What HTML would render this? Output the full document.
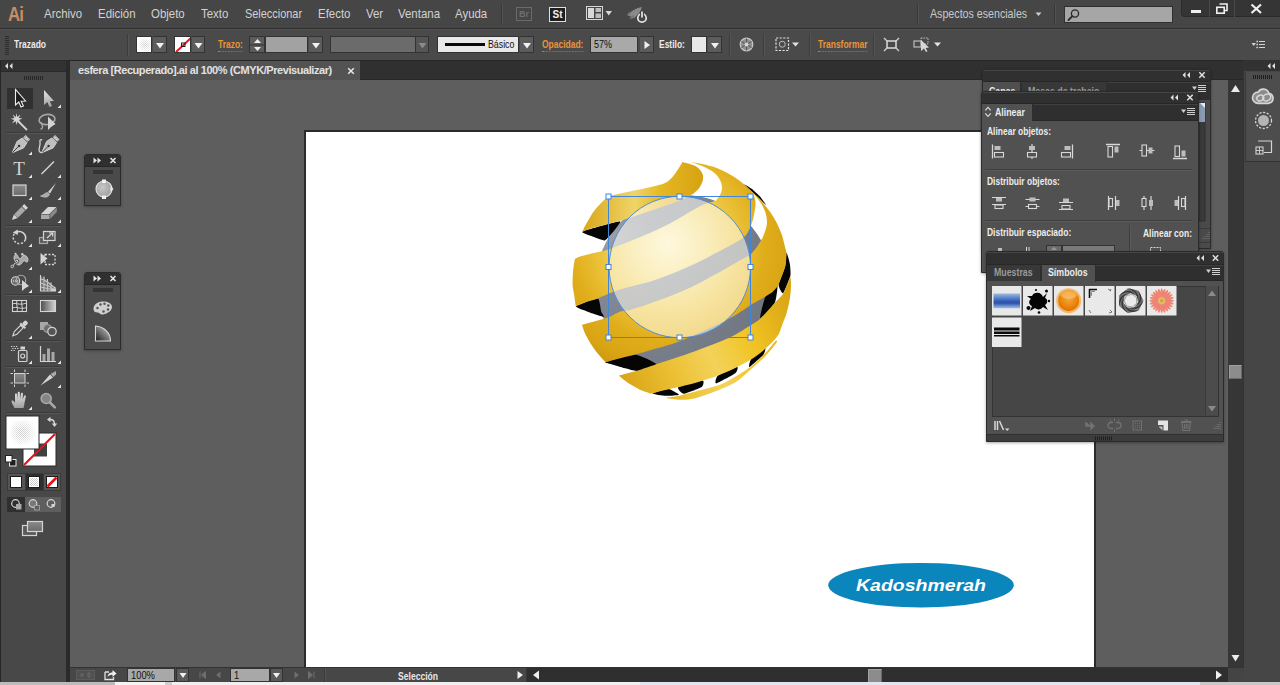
<!DOCTYPE html>
<html lang="es">
<head>
<meta charset="utf-8">
<title>esfera [Recuperado].ai</title>
<style>
*{box-sizing:border-box;margin:0;padding:0}
html,body{width:1280px;height:685px;overflow:hidden;background:#5e5e5e;font-family:"Liberation Sans",sans-serif;color:#d6d6d6;font-size:11px}
.abs{position:absolute}
#app{position:relative;width:1280px;height:685px;overflow:hidden;background:#5e5e5e}
#menubar{left:0;top:0;width:1280px;height:29px;background:#464646;border-bottom:1px solid #2e2e2e}
#menubar .mi{position:absolute;top:6px;font-size:13px;color:#d2d2d2;white-space:nowrap;transform:scaleX(.88);transform-origin:0 0}
#ctrl{left:0;top:29px;width:1280px;height:31px;background:#4a4a4a;border-top:1px solid #545454}
#tabrow{left:70px;top:60px;width:1173px;height:20px;background:#303030;border-top:1px solid #262626;border-bottom:1px solid #282828}
#tab{left:70px;top:61px;width:290px;height:19px;background:#535353;color:#e2e2e2;font-size:11px;font-weight:bold;line-height:19px;padding-left:8px;white-space:nowrap;letter-spacing:-0.43px}
#toolbox{left:0;top:60px;width:70px;height:622px;background:#484848;border-right:4px solid #2a2a2a;border-top:1px solid #2c2c2c}
#tbhead{left:0;top:61px;width:66px;height:11px;background:#323232;border-bottom:1px solid #2a2a2a}
#artboard{left:304px;top:130px;width:792px;height:540px;background:#fff;border:2px solid #2b2b2b;border-bottom:none}
#vscroll{left:1228px;top:80px;width:15px;height:587px;background:#363636}
#rdock{left:1243px;top:60px;width:37px;height:622px;background:#464646;border-left:1px solid #333;border-top:1px solid #303030}
#status{left:70px;top:667px;width:1174px;height:15px;background:#474747;border-top:1px solid #333}
#bottomstrip{left:0;top:682px;width:1280px;height:3px;background:linear-gradient(to right,#bcbcbc 0,#bcbcbc 115px,#f4f4f4 115px,#f4f4f4 165px,#cfcfcf 165px,#cfcfcf 172px,#f0f0f0 172px,#f0f0f0 640px,#dfe8f0 640px,#dfe8f0 1200px,#c8c8c8 1200px)}

.ailogo{left:8px;top:0.5px;font-size:20.500px;font-weight:bold;color:#c58e68;letter-spacing:-1px;line-height:26px;transform:scaleX(.82);transform-origin:0 0}
.vsep{width:1px;background:#383838;border-right:1px solid #525252;width:2px}
.brbox{width:16px;height:14px;border:1px solid #6a6a6a;color:#6f6f6f;font-size:9px;font-weight:bold;line-height:12px;text-align:center}
.stbox{width:17px;height:15px;border:1px solid #e0e0e0;background:#1e1e1e;color:#f0f0f0;font-size:10px;font-weight:bold;line-height:13px;text-align:center}
#search{left:1064px;top:6px;width:109px;height:17px;background:#a6a6a6;border:1px solid #303030}
#winbtns{left:1181px;top:0;width:99px;height:17px;background:#353535;border-bottom-left-radius:4px;border-left:1px solid #2a2a2a;border-bottom:1px solid #2a2a2a}

.grip{width:4px;height:19px;background:repeating-linear-gradient(to bottom,#2c2c2c 0,#2c2c2c 1px,transparent 1px,transparent 2px)}
.cl{color:#eaeaea;font-size:11px;font-weight:bold;white-space:nowrap;transform:scaleX(.77);transform-origin:0 0}
.ol{color:#e8943a;font-size:11px;font-weight:bold;white-space:nowrap;border-bottom:1px dotted #c07a30;line-height:13px;transform:scaleX(.77);transform-origin:0 0}
.vsep2{top:4px;height:22px;width:2px;background:#3c3c3c;border-right:1px solid #555}
.sw{top:6px;width:16px;height:17px;border:1px solid #333;overflow:hidden}
.sw svg{display:block}
.ddb{top:6px;height:17px;border:1px solid #333;border-left:none;overflow:hidden}
.ddb svg{display:block}
.spin{top:6px;width:16px;height:17px;border:1px solid #333;overflow:hidden;background:#333}
.spin svg{display:block}
.inp{top:6px;height:17px;background:#a2a2a2;border:1px solid #333}

.panel{background:#4f4f4f;border:1px solid #2b2b2b;border-radius:3px 3px 0 0;overflow:hidden;box-shadow:0 1px 3px rgba(0,0,0,.35)}
.phead{background:#303030;border-top:1px solid #454545;border-bottom:1px solid #272727}
.ptabs{background:#2f2f2f;border-top:1px solid #404040;border-bottom:1px solid #272727}
.ptab{background:#4f4f4f;border-right:1px solid #2e2e2e}
.ptab.off{background:#383838}
.pt{position:absolute;color:#ececec;font-size:11px;font-weight:bold;white-space:nowrap;transform:scaleX(.8);transform-origin:0 0;line-height:13px}

.fpanel{background:#4a4a4a;border:1px solid #2b2b2b;border-radius:3px 3px 0 0;overflow:hidden;box-shadow:0 1px 3px rgba(0,0,0,.3)}
.sinp{top:0px;height:14px;background:#a8a8a8;border:1px solid #333}
.sinp span{position:absolute;left:3px;top:0px;color:#111;font-size:11px;transform:scaleX(.85);transform-origin:0 0;line-height:12px}
.sdd{top:0px;width:13px;height:14px;background:#5a5a5a;border:1px solid #333}
</style>
</head>
<body>
<div id="app">
<!--MENUBAR-->
<div id="menubar" class="abs">
<div class="abs ailogo">Ai</div>
<span class="mi" style="left:44px">Archivo</span>
<span class="mi" style="left:98px">Edición</span>
<span class="mi" style="left:151px">Objeto</span>
<span class="mi" style="left:201px">Texto</span>
<span class="mi" style="left:245px;transform:scaleX(.84)">Seleccionar</span>
<span class="mi" style="left:318px">Efecto</span>
<span class="mi" style="left:366px">Ver</span>
<span class="mi" style="left:398px">Ventana</span>
<span class="mi" style="left:455px">Ayuda</span>
<div class="abs vsep" style="left:501px;top:4px;height:20px"></div>
<div class="abs brbox" style="left:516px;top:7px">Br</div>
<div class="abs stbox" style="left:549px;top:7px">St</div>
<svg class="abs" style="left:586px;top:6px" width="30" height="15" viewBox="0 0 30 15">
<rect x="0.5" y="0.5" width="16" height="13" fill="none" stroke="#d8d8d8" stroke-width="1"/>
<rect x="2" y="2" width="6" height="10" fill="#d8d8d8"/>
<rect x="9.5" y="2" width="5.5" height="4" fill="#bdbdbd"/>
<rect x="9.5" y="7.5" width="5.5" height="4.5" fill="#bdbdbd"/>
<path d="M19.5 5 L26 5 L22.75 9.5 Z" fill="#d8d8d8"/>
</svg>
<svg class="abs" style="left:626px;top:5px" width="24" height="20" viewBox="0 0 24 20">
<path d="M1 10 C5 6 10 3 16 2 C15 6 12 10 8 13 Z" fill="#8a8a8a"/>
<path d="M3 14 L7 10 L9 13 Z M2 8 L6 7 L3 11Z" fill="#7a7a7a"/>
<circle cx="16" cy="13" r="4.2" fill="none" stroke="#e0e0e0" stroke-width="1.8"/>
<rect x="14" y="6" width="4" height="5" fill="#454545"/>
<rect x="15.1" y="6.5" width="1.8" height="6" fill="#e0e0e0"/>
</svg>
<div class="abs vsep" style="left:917px;top:4px;height:20px"></div>
<span class="mi" style="left:930px;color:#c9c9c9;transform:scaleX(.82)">Aspectos esenciales</span>
<svg class="abs" style="left:1034px;top:11px" width="9" height="6" viewBox="0 0 9 6"><path d="M1.5 1.5 L7.5 1.5 L4.5 5 Z" fill="#cfcfcf"/></svg>
<div class="abs vsep" style="left:1054px;top:4px;height:20px"></div>
<div class="abs" id="search"><svg width="14" height="14" viewBox="0 0 14 14" style="position:absolute;left:2px;top:1px"><circle cx="8" cy="5.5" r="3.6" fill="none" stroke="#2a2a2a" stroke-width="1.3"/><path d="M5.4 8.2 L1.5 12" stroke="#2a2a2a" stroke-width="1.8" stroke-linecap="round"/></svg></div>
<div class="abs" id="winbtns">
<div class="abs" style="left:27px;top:0;width:1px;height:17px;background:#4a4a4a"></div>
<div class="abs" style="left:52px;top:0;width:1px;height:17px;background:#4a4a4a"></div>
<div class="abs" style="left:9px;top:10px;width:10px;height:3px;background:#f0f0f0"></div>
<svg class="abs" style="left:33px;top:3px" width="14" height="12" viewBox="0 0 14 12"><path d="M4.5 1 H12 V7.5 H9.5" fill="none" stroke="#f0f0f0" stroke-width="1.6"/><rect x="1.8" y="4.3" width="7.4" height="5.9" fill="none" stroke="#f0f0f0" stroke-width="1.6"/></svg>
<svg class="abs" style="left:68px;top:3px" width="13" height="12" viewBox="0 0 13 12"><path d="M1.5 1.5 L11 10 M11 1.5 L1.5 10" stroke="#f0f0f0" stroke-width="2.2"/></svg>
</div>
</div>
<!--CTRL-->
<div id="ctrl" class="abs">
<div class="abs grip" style="left:5px;top:6px"></div>
<span class="abs cl" style="left:14px;top:8px">Trazado</span>
<div class="abs vsep2" style="left:127px"></div>
<div class="abs sw" style="left:136px;background:#fff"><svg width="16" height="16" viewBox="0 0 16 16"><defs><pattern id="dots" width="2" height="2" patternUnits="userSpaceOnUse"><rect width="1" height="1" fill="#c9c9c9"/><rect x="1" y="1" width="1" height="1" fill="#c9c9c9"/></pattern><radialGradient id="fade"><stop offset="0" stop-color="#fff" stop-opacity="0"/><stop offset="1" stop-color="#fff" stop-opacity="1"/></radialGradient></defs><rect width="16" height="16" fill="url(#dots)"/><rect width="16" height="16" fill="url(#fade)"/></svg></div>
<div class="abs ddb" style="left:153px;width:14px;background:#5c5c5c"><svg width="14" height="16" viewBox="0 0 14 16"><path d="M3.0 6 L11.0 6 L7.0 11.5 Z" fill="#f2f2f2"/></svg></div>
<div class="abs sw" style="left:174px;background:#fff;width:17px"><svg width="17" height="16" viewBox="0 0 17 16"><path d="M1 15 L16 1" stroke="#e8141c" stroke-width="2"/><rect x="6.5" y="6" width="3.5" height="3.5" fill="none" stroke="#222" stroke-width="1"/></svg></div>
<div class="abs ddb" style="left:192px;width:13px;background:#5c5c5c"><svg width="13" height="16" viewBox="0 0 13 16"><path d="M2.5 6 L10.5 6 L6.5 11.5 Z" fill="#f2f2f2"/></svg></div>
<span class="abs ol" style="left:218px;top:8px">Trazo:</span>
<div class="abs spin" style="left:249px"><svg width="15" height="16" viewBox="0 0 15 16"><rect width="15" height="7.5" fill="#5c5c5c"/><rect y="8.5" width="15" height="7.5" fill="#5c5c5c"/><path d="M4 6 L11 6 L7.5 2 Z" fill="#efefef"/><path d="M4 10 L11 10 L7.5 14 Z" fill="#efefef"/></svg></div>
<div class="abs inp" style="left:265px;width:43px"></div>
<div class="abs ddb" style="left:309px;width:14px;background:#5c5c5c"><svg width="14" height="16" viewBox="0 0 14 16"><path d="M3.0 6 L11.0 6 L7.0 11.5 Z" fill="#f2f2f2"/></svg></div>
<div class="abs inp" style="left:330px;width:86px;background:#6b6b6b"></div>
<div class="abs ddb" style="left:416px;width:13px;background:#555"><svg width="13" height="16" viewBox="0 0 13 16"><path d="M2.5 6 L10.5 6 L6.5 11.5 Z" fill="#8a8a8a"/></svg></div>
<div class="abs inp" style="left:437px;width:82px;background:#e9e9e9"><div class="abs" style="left:7px;top:6px;width:40px;height:3px;background:#0a0a0a"></div><span class="abs" style="left:50px;top:1px;color:#111;font-size:11px;transform:scaleX(.8);transform-origin:0 0">Básico</span></div>
<div class="abs ddb" style="left:520px;width:14px;background:#5c5c5c"><svg width="14" height="16" viewBox="0 0 14 16"><path d="M3.0 6 L11.0 6 L7.0 11.5 Z" fill="#f2f2f2"/></svg></div>
<span class="abs ol" style="left:542px;top:8px">Opacidad:</span>
<div class="abs inp" style="left:590px;width:48px;background:#a9a9a9"><span class="abs" style="left:3px;top:1px;color:#111;font-size:11px;transform:scaleX(.82);transform-origin:0 0">57%</span></div>
<div class="abs ddb" style="left:640px;width:14px;background:#5c5c5c"><svg width="14" height="16" viewBox="0 0 14 16"><path d="M4.5 4 L4.5 12 L10 8 Z" fill="#f2f2f2"/></svg></div>
<span class="abs cl" style="left:659px;top:8px">Estilo:</span>
<div class="abs sw" style="left:691px;background:#e8e8e8"></div>
<div class="abs ddb" style="left:708px;width:14px;background:#5c5c5c"><svg width="14" height="16" viewBox="0 0 14 16"><path d="M3.0 6 L11.0 6 L7.0 11.5 Z" fill="#f2f2f2"/></svg></div>
<div class="abs vsep2" style="left:729px"></div>
<svg class="abs" style="left:739px;top:7px" width="15" height="15" viewBox="0 0 15 15"><circle cx="7.5" cy="7.5" r="6.3" fill="#8e8e8e" stroke="#c8c8c8" stroke-width="1.2"/><path d="M7.5 7.5 L7.5 1.5 M7.5 7.5 L12.5 4.5 M7.5 7.5 L12.5 10.5 M7.5 7.5 L7.5 13.5 M7.5 7.5 L2.5 10.5 M7.5 7.5 L2.5 4.5" stroke="#555" stroke-width="1"/><circle cx="7.5" cy="7.5" r="2" fill="#d5d5d5"/></svg>
<div class="abs vsep2" style="left:763px"></div>
<svg class="abs" style="left:775px;top:7px" width="28" height="15" viewBox="0 0 28 15"><rect x="1" y="1" width="12.5" height="12.5" fill="none" stroke="#e0e0e0" stroke-width="1.2" stroke-dasharray="2.2 1.4"/><circle cx="7.25" cy="7.25" r="3" fill="none" stroke="#bdbdbd" stroke-width="1"/><path d="M17 5.5 L24 5.5 L20.5 9.5 Z" fill="#e0e0e0"/></svg>
<div class="abs vsep2" style="left:809px"></div>
<span class="abs ol" style="left:818px;top:8px">Transformar</span>
<div class="abs vsep2" style="left:873px"></div>
<svg class="abs" style="left:883px;top:6px" width="17" height="17" viewBox="0 0 17 17"><rect x="4" y="5" width="9" height="7" fill="none" stroke="#e4e4e4" stroke-width="1.4"/><path d="M1 2 L4 5 M16 2 L13 5 M1 15 L4 12 M16 15 L13 12" stroke="#cfcfcf" stroke-width="1.4"/></svg>
<svg class="abs" style="left:913px;top:6px" width="30" height="17" viewBox="0 0 30 17"><rect x="1" y="5" width="7" height="6" fill="none" stroke="#bdbdbd" stroke-width="1.2"/><rect x="8" y="2" width="7" height="6" fill="none" stroke="#bdbdbd" stroke-width="1" stroke-dasharray="1.5 1"/><path d="M8 4 L8 15 L11 12.5 L13 16 L14.5 15.2 L12.6 12 L16 11.5 Z" fill="#d8d8d8"/><path d="M21 6.5 L28 6.5 L24.5 10.5 Z" fill="#e4e4e4"/></svg>
<svg class="abs" style="left:1251px;top:9px" width="15" height="11" viewBox="0 0 15 11"><path d="M0.500 4 L5 4 L2.750 7 Z" fill="#d0d0d0"/><path d="M8 2.500 H14 M8 5.500 H14 M8 8.500 H14" stroke="#d4d4d4" stroke-width="1.100"/><path d="M5.500 2.500 h1.300 M5.500 5.500 h1.300 M5.500 8.500 h1.300" stroke="#f0f0f0" stroke-width="1.300"/></svg>
</div>
<!--TABROW-->
<div id="tabrow" class="abs"></div>
<div id="tab" class="abs">esfera [Recuperado].ai al 100% (CMYK/Previsualizar)<svg class="abs" style="left:277px;top:5.500px" width="8" height="8" viewBox="0 0 8 8"><path d="M1.200 1.200 L6.800 6.800 M6.800 1.200 L1.200 6.800" stroke="#e8e8e8" stroke-width="1.500"/></svg></div>
<!--ARTBOARD-->
<div id="artboard" class="abs"></div>
<!--SPHERE-->
<svg class="abs" style="left:540px;top:140px" width="280" height="280" viewBox="540 140 280 280">
<defs>
<radialGradient id="gold" gradientUnits="userSpaceOnUse" cx="668" cy="245" r="135"><stop offset="0" stop-color="#fbeeb2"/><stop offset="0.25" stop-color="#f5dc7c"/><stop offset="0.5" stop-color="#ecc43c"/><stop offset="0.72" stop-color="#e0ad1a"/><stop offset="0.88" stop-color="#daa515"/><stop offset="1" stop-color="#cc970e"/></radialGradient>
<linearGradient id="goldB" gradientUnits="userSpaceOnUse" x1="615" y1="380" x2="792" y2="300"><stop offset="0" stop-color="#d7a213"/><stop offset="0.3" stop-color="#ecc136"/><stop offset="0.5" stop-color="#f3d25a"/><stop offset="0.72" stop-color="#f1c424"/><stop offset="1" stop-color="#d9a514"/></linearGradient>
<linearGradient id="goldT" gradientUnits="userSpaceOnUse" x1="580" y1="0" x2="710" y2="0"><stop offset="0" stop-color="#d9a516"/><stop offset="0.42" stop-color="#efd468"/><stop offset="0.62" stop-color="#e6b822"/><stop offset="1" stop-color="#d49e10"/></linearGradient>
<linearGradient id="goldR" gradientUnits="userSpaceOnUse" x1="690" y1="0" x2="792" y2="0"><stop offset="0" stop-color="#e0ac18"/><stop offset="0.6" stop-color="#d9a414"/><stop offset="1" stop-color="#c8920e"/></linearGradient>
<radialGradient id="gray" gradientUnits="userSpaceOnUse" cx="610" cy="235" r="190"><stop offset="0" stop-color="#9ca0aa"/><stop offset="0.2" stop-color="#858b98"/><stop offset="0.6" stop-color="#79808c"/><stop offset="1" stop-color="#6c747e"/></radialGradient>
<radialGradient id="ov" gradientUnits="userSpaceOnUse" cx="668" cy="240" r="100"><stop offset="0" stop-color="#ffffff"/><stop offset="1" stop-color="#fffbe6"/></radialGradient>
</defs>
<circle cx="684" cy="283" r="88" fill="url(#gray)"/>
<path d="M582.4 231.7 C583.9 230.7 605.8 224.6 609.0 223.8 C612.2 223.0 620.1 221.0 620.4 221.7 C620.7 222.4 613.9 231.0 612.6 232.6 C611.3 234.2 606.5 240.1 604.7 240.4 C602.9 240.7 593.4 236.7 591.5 236.0 C589.6 235.3 580.9 232.7 582.4 231.7 Z" fill="#050505"/>
<path d="M575.8 306.3 C576.5 305.1 595.6 298.0 597.7 298.4 C599.8 298.8 600.7 310.0 601.2 311.5 C601.7 313.0 604.8 316.7 603.8 316.8 C602.8 316.9 592.1 313.3 589.8 312.4 C587.5 311.5 575.1 307.5 575.8 306.3 Z" fill="#050505"/>
<path d="M605.3 361.8 C607.1 360.9 630.7 354.2 635.0 354.4 C639.3 354.6 656.8 363.1 657.0 364.5 C657.2 365.9 640.1 370.7 637.5 371.0 C634.9 371.3 628.3 369.1 626.3 368.6 C624.3 368.1 614.8 365.3 613.0 364.7 C611.2 364.1 603.5 362.7 605.3 361.8 Z" fill="#050505"/>
<path d="M744.0 184.2 C744.4 184.3 750.7 188.0 752.0 189.0 C753.3 190.0 758.8 195.2 760.0 196.5 C761.2 197.8 766.2 204.9 766.0 205.0 C765.8 205.1 759.5 198.7 758.0 197.3 C756.5 195.9 748.8 188.8 747.6 187.7 C746.4 186.6 743.6 184.1 744.0 184.2 Z" fill="#050505"/>
<path d="M786.5 252.5 C786.9 252.3 789.5 261.7 789.8 263.6 C790.1 265.5 790.9 273.0 790.4 275.5 C789.9 278.0 784.2 292.4 783.2 293.2 C782.2 294.0 778.4 286.9 778.6 284.7 C778.8 282.5 784.5 269.0 785.2 266.3 C785.9 263.6 786.1 252.7 786.5 252.5 Z" fill="#050505"/>
<path d="M765.5 296.5 C766.9 293.8 776.5 284.8 777.3 285.3 C778.1 285.8 776.1 300.3 774.7 303.0 C773.3 305.7 761.0 318.6 760.2 318.1 C759.4 317.6 764.1 299.2 765.5 296.5 Z" fill="#050505"/>
<path d="M652.6 393.4 C652.8 392.8 666.2 388.9 668.4 389.0 C670.6 389.1 679.1 394.1 678.9 394.7 C678.7 395.3 667.9 395.9 665.7 395.8 C663.5 395.7 652.4 394.0 652.6 393.4 Z" fill="#050505"/>
<path d="M678.3 387.2 C679.9 386.1 700.5 380.6 702.5 380.6 C704.5 380.6 703.3 385.9 701.7 387.0 C700.1 388.1 685.8 393.7 683.8 393.7 C681.8 393.7 676.7 388.3 678.3 387.2 Z" fill="#050505"/>
<path d="M717.8 375.8 C719.5 374.4 735.6 367.3 737.1 367.1 C738.6 366.9 737.0 371.9 735.3 373.3 C733.5 374.7 717.6 383.2 716.1 383.4 C714.6 383.6 716.0 377.2 717.8 375.8 Z" fill="#050505"/>
<path d="M751.1 359.2 C752.4 357.6 764.1 348.2 765.1 347.8 C766.1 347.4 764.7 353.2 763.4 354.8 C762.1 356.4 750.3 366.7 749.3 367.1 C748.3 367.5 749.8 360.8 751.1 359.2 Z" fill="#050505"/>
<path d="M666.6 397.4 C668.3 397.2 673.6 396.8 677.0 396.2 C680.4 395.6 682.4 394.8 686.9 393.7 C691.4 392.6 699.9 390.3 703.8 389.3 C707.7 388.3 706.6 388.8 710.3 387.6 C714.0 386.4 719.2 385.5 726.0 382.0 C732.8 378.5 744.5 371.2 751.0 366.5 C757.5 361.8 760.9 357.8 765.0 353.5 C769.1 349.2 773.8 342.9 775.6 340.8 C775.8 341.1 778.3 340.0 776.5 342.6 C774.7 345.2 769.8 351.7 765.0 356.6 C760.2 361.6 752.1 368.3 747.6 372.3 C743.1 376.3 741.3 378.4 737.7 380.8 C734.1 383.2 730.6 384.9 726.0 387.0 C721.4 389.1 715.5 391.4 710.3 393.3 C705.1 395.2 699.7 397.3 694.7 398.4 C689.8 399.5 685.3 399.8 680.6 399.7 C675.9 399.6 668.9 398.2 666.6 397.9 L666.6 397.4 Z" fill="url(#goldB)"/>
<path d="M618.7 375.5 C622.1 374.6 631.9 372.3 638.8 370.2 C645.7 368.1 650.6 366.1 660.0 363.0 C669.4 359.9 683.3 355.6 695.0 351.3 C706.7 347.0 720.7 341.7 730.0 337.3 C739.3 332.9 746.0 328.1 751.0 325.0 C756.0 321.9 756.2 322.5 760.2 318.8 C764.2 315.1 770.9 307.3 774.7 303.0 C778.5 298.7 780.7 297.4 783.2 293.2 C785.7 289.0 788.6 280.9 789.8 278.0 C791.0 275.1 790.3 275.9 790.4 275.5 C790.5 277.2 791.1 282.1 791.0 286.0 C790.9 289.9 790.5 294.4 789.8 299.0 C789.0 303.6 787.7 309.3 786.5 313.5 C785.3 317.7 783.7 320.6 782.5 324.0 C781.3 327.4 779.7 332.2 779.1 333.8 C777.9 335.3 775.5 339.1 772.0 342.6 C768.5 346.1 762.7 351.3 758.0 354.8 C753.3 358.3 748.7 361.0 744.0 363.6 C739.3 366.2 735.2 368.3 730.0 370.6 C724.8 372.9 718.4 375.6 712.6 377.6 C706.8 379.7 700.9 381.3 695.0 382.9 C689.1 384.5 681.9 386.1 677.5 387.2 C673.1 388.2 671.3 388.5 668.4 389.2 C665.5 389.9 662.6 390.6 660.0 391.3 C657.4 392.0 653.8 393.0 652.6 393.4 C652.0 393.3 651.2 393.6 649.0 392.9 C646.8 392.2 642.4 390.8 639.4 389.4 C636.4 388.0 633.5 386.4 630.7 384.6 C627.9 382.9 624.8 380.4 622.8 378.9 C620.8 377.4 619.4 376.1 618.7 375.5 Z" fill="url(#goldB)"/>
<path d="M581.9 324.7 C584.1 324.1 590.5 322.5 595.0 321.2 C599.5 319.9 604.8 318.6 609.0 317.0 C613.2 315.4 616.8 312.7 620.4 311.5 C624.0 310.3 624.7 311.3 630.5 309.7 C636.3 308.1 645.1 305.4 655.0 301.8 C664.9 298.2 679.8 292.5 690.0 287.8 C700.2 283.1 707.6 278.6 716.4 273.8 C725.2 269.0 736.9 262.2 742.6 259.0 C748.3 255.8 747.9 256.8 750.5 254.5 C753.1 252.2 756.8 247.0 758.0 245.5 C758.9 243.9 761.9 239.5 763.4 235.8 C764.9 232.2 766.6 227.7 766.9 223.6 C767.2 219.5 766.5 215.4 765.0 211.3 C763.5 207.2 760.9 202.9 758.0 199.0 C755.1 195.1 749.3 189.6 747.6 187.7 C749.3 189.3 753.9 192.8 758.0 197.3 C762.1 201.8 768.2 209.0 772.0 214.8 C775.8 220.6 778.7 226.8 780.9 232.3 C783.1 237.8 784.4 244.6 785.3 248.0 C786.2 251.4 786.3 252.2 786.5 253.0 C786.3 255.2 786.5 261.0 785.2 266.3 C783.9 271.6 779.7 281.6 778.6 284.7 C777.7 285.8 775.5 289.2 773.3 291.2 C771.1 293.2 768.9 294.4 765.5 296.5 C762.1 298.6 756.8 301.2 753.0 303.6 C749.2 306.0 747.3 307.7 742.6 310.6 C737.9 313.5 733.8 316.6 725.0 321.0 C716.2 325.4 698.8 333.2 690.0 337.0 C681.2 340.8 678.5 341.8 672.0 344.0 C665.5 346.2 657.1 348.2 651.0 350.0 C644.9 351.8 640.2 353.2 635.3 354.5 C630.3 355.8 626.3 356.7 621.3 358.0 C616.3 359.3 608.1 361.6 605.5 362.3 C603.8 360.2 598.2 354.4 595.0 350.0 C591.8 345.6 588.5 340.2 586.3 336.0 C584.1 331.8 582.6 326.6 581.9 324.7 Z" fill="url(#gold)"/>
<path d="M574.9 258.8 C575.9 258.4 577.6 257.2 581.0 256.2 C584.4 255.2 590.3 253.9 595.0 252.7 C599.7 251.5 603.2 251.1 609.0 249.2 C614.8 247.3 623.0 244.1 630.0 241.3 C637.0 238.5 643.7 235.9 651.0 232.6 C658.3 229.2 665.7 225.6 673.9 221.2 C682.1 216.8 693.0 209.7 700.0 206.3 C707.0 202.9 713.3 201.7 716.0 200.8 C716.9 199.3 720.4 194.9 721.3 192.0 C722.2 189.1 722.2 186.2 721.3 183.3 C720.4 180.4 718.6 177.1 716.0 174.5 C713.4 171.9 709.9 169.7 705.5 167.5 C701.1 165.3 692.4 162.4 689.8 161.4 C693.6 162.3 705.9 164.4 712.6 166.6 C719.3 168.8 724.8 171.6 730.0 174.5 C735.2 177.4 740.2 181.0 744.0 184.2 C747.8 187.4 751.0 190.7 752.9 193.8 C754.8 196.9 755.2 199.7 755.5 202.6 C755.8 205.5 755.0 208.4 754.6 211.3 C754.2 214.2 753.8 217.1 752.9 220.0 C752.0 222.9 750.1 227.5 749.5 229.0 C748.9 230.0 747.8 233.1 746.0 235.0 C744.2 236.9 743.9 237.5 739.0 240.5 C734.1 243.5 724.6 248.6 716.4 252.8 C708.2 257.1 700.2 261.5 690.0 266.0 C679.8 270.5 666.7 276.1 655.0 280.0 C643.3 283.9 629.5 286.5 620.0 289.6 C610.5 292.7 603.3 296.3 597.7 298.4 C592.1 300.4 589.9 300.6 586.3 301.9 C582.6 303.2 577.5 305.6 575.8 306.3 C575.5 304.2 574.5 297.5 574.0 294.0 C573.5 290.5 572.8 288.9 572.6 285.1 C572.5 281.3 572.7 275.5 573.1 271.1 C573.5 266.7 574.6 260.9 574.9 258.8 Z" fill="url(#gold)"/>
<path d="M582.4 231.7 C583.0 230.4 584.2 227.5 586.3 223.8 C588.4 220.2 591.4 214.4 595.0 209.8 C598.6 205.2 606.0 198.4 608.2 196.1 C611.8 195.3 622.9 192.9 630.0 191.4 C637.1 189.9 645.2 188.4 651.0 187.0 C656.8 185.6 661.4 184.7 665.0 183.0 C668.6 181.3 670.1 179.4 672.4 177.0 C674.7 174.6 676.9 170.9 678.6 168.4 C680.3 165.9 681.8 163.0 682.4 161.9 C684.5 162.6 691.7 164.0 695.0 165.8 C698.3 167.6 700.7 170.5 702.0 172.8 C703.3 175.1 703.3 177.3 702.9 179.8 C702.5 182.3 701.0 185.4 699.4 187.7 C697.8 190.0 694.3 192.8 693.3 193.8 C692.1 194.4 689.2 196.0 686.0 197.5 C682.8 199.0 679.8 200.6 674.0 202.8 C668.2 205.0 658.3 208.2 651.0 210.7 C643.7 213.2 637.0 215.5 630.0 217.7 C623.0 219.9 615.4 222.1 609.0 223.8 C602.6 225.6 595.9 226.9 591.5 228.2 C587.1 229.5 583.9 231.1 582.4 231.7 Z" fill="url(#goldT)"/>
<circle cx="679.8" cy="267" r="70.7" fill="url(#ov)" fill-opacity="0.57"/>
<circle cx="679.8" cy="267" r="70.7" fill="none" stroke="#4f8fdc" stroke-width="1"/>
<rect x="608.5" y="196.500" width="142" height="141" fill="none" stroke="#3f86dc" stroke-width="1"/>
<rect x="606.0" y="194.0" width="5" height="5" fill="#fff" stroke="#3f86dc" stroke-width="1"/>
<rect x="606.0" y="264.5" width="5" height="5" fill="#fff" stroke="#3f86dc" stroke-width="1"/>
<rect x="606.0" y="335.0" width="5" height="5" fill="#fff" stroke="#3f86dc" stroke-width="1"/>
<rect x="677.0" y="194.0" width="5" height="5" fill="#fff" stroke="#3f86dc" stroke-width="1"/>
<rect x="677.0" y="335.0" width="5" height="5" fill="#fff" stroke="#3f86dc" stroke-width="1"/>
<rect x="748.0" y="194.0" width="5" height="5" fill="#fff" stroke="#3f86dc" stroke-width="1"/>
<rect x="748.0" y="264.5" width="5" height="5" fill="#fff" stroke="#3f86dc" stroke-width="1"/>
<rect x="748.0" y="335.0" width="5" height="5" fill="#fff" stroke="#3f86dc" stroke-width="1"/>
</svg>
<!--LOGO-->
<svg class="abs" style="left:820px;top:555px" width="200" height="60" viewBox="820 555 200 60">
<ellipse cx="921" cy="585.200" rx="92.800" ry="22.300" fill="#0a86bd"/>
<text x="921" y="591" text-anchor="middle" font-family="Liberation Sans,sans-serif" font-weight="bold" font-style="italic" font-size="17" fill="#fff" textLength="130" lengthAdjust="spacingAndGlyphs">Kadoshmerah</text>
</svg>
<!--FLOAT-->
<div class="abs fpanel" style="left:84px;top:154px;width:37px;height:52px"><div class="abs" style="left:0;top:0;width:100%;height:12px;background:#303030;border-bottom:1px solid #262626"></div></div>
<div class="abs fpanel" style="left:84px;top:272px;width:37px;height:78px"><div class="abs" style="left:0;top:0;width:100%;height:12px;background:#303030;border-bottom:1px solid #262626"></div></div>
<svg class="abs" style="left:80px;top:150px" width="50" height="210" viewBox="80 150 50 210">
<defs><linearGradient id="qg" x1="0" y1="1" x2="1" y2="0"><stop offset="0" stop-color="#1a1a1a"/><stop offset="0.6" stop-color="#8a8a8a"/><stop offset="1" stop-color="#e0e0e0"/></linearGradient><radialGradient id="cg" cx="0.4" cy="0.4" r="0.7"><stop offset="0" stop-color="#c8c8c8"/><stop offset="1" stop-color="#9a9a9a"/></radialGradient></defs>
<path d="M93.5 157.5 L97 160.5 L93.5 163.5 Z M97.5 157.5 L101 160.5 L97.500 163.5 Z" fill="#e4e4e4"/>
<path d="M110.500 158.0 L115.500 163.0 M115.500 158.0 L110.500 163.0" stroke="#e4e4e4" stroke-width="1.500"/>
<path d="M93.5 275.5 L97 278.5 L93.5 281.5 Z M97.5 275.5 L101 278.5 L97.500 281.5 Z" fill="#e4e4e4"/>
<path d="M110.500 276.0 L115.500 281.0 M115.500 276.0 L110.500 281.0" stroke="#e4e4e4" stroke-width="1.500"/>
<rect x="93.5" y="170" width="1" height="4" fill="#1e1e1e"/>
<rect x="95.5" y="170" width="1" height="4" fill="#1e1e1e"/>
<rect x="97.5" y="170" width="1" height="4" fill="#1e1e1e"/>
<rect x="99.5" y="170" width="1" height="4" fill="#1e1e1e"/>
<rect x="101.5" y="170" width="1" height="4" fill="#1e1e1e"/>
<rect x="103.5" y="170" width="1" height="4" fill="#1e1e1e"/>
<rect x="105.5" y="170" width="1" height="4" fill="#1e1e1e"/>
<rect x="107.5" y="170" width="1" height="4" fill="#1e1e1e"/>
<rect x="109.5" y="170" width="1" height="4" fill="#1e1e1e"/>
<rect x="111.5" y="170" width="1" height="4" fill="#1e1e1e"/>
<rect x="93.5" y="288" width="1" height="4" fill="#1e1e1e"/>
<rect x="95.5" y="288" width="1" height="4" fill="#1e1e1e"/>
<rect x="97.5" y="288" width="1" height="4" fill="#1e1e1e"/>
<rect x="99.5" y="288" width="1" height="4" fill="#1e1e1e"/>
<rect x="101.5" y="288" width="1" height="4" fill="#1e1e1e"/>
<rect x="103.5" y="288" width="1" height="4" fill="#1e1e1e"/>
<rect x="105.5" y="288" width="1" height="4" fill="#1e1e1e"/>
<rect x="107.5" y="288" width="1" height="4" fill="#1e1e1e"/>
<rect x="109.5" y="288" width="1" height="4" fill="#1e1e1e"/>
<rect x="111.5" y="288" width="1" height="4" fill="#1e1e1e"/>
<circle cx="104" cy="189" r="8" fill="url(#cg)" stroke="#e0e0e0" stroke-width="1.200"/>
<rect x="102" y="179.500" width="4" height="3.500" fill="#f0f0f0"/><rect x="102" y="195.500" width="4" height="3.500" fill="#f0f0f0"/><path d="M110.500 186.500 L113.500 189 L110.500 191.500 Z" fill="#f0f0f0"/>
<path d="M93.500 309 C93.500 304 98 301.500 103.500 301.500 C109 301.500 112 304 112 307 C112 310.500 108 313.500 103 314.500 C100 315 99.500 312.500 97.500 312.500 C95 312.500 93.500 311.500 93.500 309 Z" fill="#cfcfcf"/>
<circle cx="97.5" cy="308" r="1.250" fill="#555"/>
<circle cx="100.5" cy="304.5" r="1.250" fill="#555"/>
<circle cx="104.5" cy="303.8" r="1.250" fill="#555"/>
<circle cx="108.3" cy="305.5" r="1.250" fill="#555"/>
<circle cx="108" cy="309.5" r="1.250" fill="#555"/>
<circle cx="103.5" cy="311.5" r="1.250" fill="#555"/>
<path d="M95.500 326 L95.500 341 L110.500 341 C110.500 333 104 326.500 95.500 326 Z" fill="url(#qg)" stroke="#d8d8d8" stroke-width="1.100"/>
</svg>
<!--TOOLBOX-->
<div id="toolbox" class="abs"></div>
<div id="tbhead" class="abs"></div>
<svg class="abs" style="left:0;top:0" width="67" height="685" viewBox="0 0 67 685">
<defs><linearGradient id="gv" x1="0" y1="0" x2="0" y2="1"><stop offset="0" stop-color="#8a8a8a"/><stop offset="1" stop-color="#6a6a6a"/></linearGradient><linearGradient id="gh" x1="0" y1="0" x2="1" y2="0"><stop offset="0" stop-color="#4a4a4a"/><stop offset="1" stop-color="#d8d8d8"/></linearGradient><linearGradient id="gl" x1="0" y1="0" x2="0" y2="1"><stop offset="0" stop-color="#e4e4e4"/><stop offset="1" stop-color="#a0a0a0"/></linearGradient></defs>
<path d="M8 63 L5 66 L8 69 Z M12.5 63 L9.5 66 L12.5 69 Z" fill="#e0e0e0"/>
<rect x="24" y="76" width="1" height="4" fill="#262626"/>
<rect x="26" y="76" width="1" height="4" fill="#262626"/>
<rect x="28" y="76" width="1" height="4" fill="#262626"/>
<rect x="30" y="76" width="1" height="4" fill="#262626"/>
<rect x="32" y="76" width="1" height="4" fill="#262626"/>
<rect x="34" y="76" width="1" height="4" fill="#262626"/>
<rect x="36" y="76" width="1" height="4" fill="#262626"/>
<rect x="38" y="76" width="1" height="4" fill="#262626"/>
<rect x="40" y="76" width="1" height="4" fill="#262626"/>
<rect x="42" y="76" width="1" height="4" fill="#262626"/>
<rect x="6" y="132" width="55" height="1" fill="#3a3a3a"/><rect x="6" y="133" width="55" height="1" fill="#565656"/>
<rect x="6" y="225" width="55" height="1" fill="#3a3a3a"/><rect x="6" y="226" width="55" height="1" fill="#565656"/>
<rect x="6" y="294" width="55" height="1" fill="#3a3a3a"/><rect x="6" y="295" width="55" height="1" fill="#565656"/>
<rect x="6" y="340" width="55" height="1" fill="#3a3a3a"/><rect x="6" y="341" width="55" height="1" fill="#565656"/>
<rect x="6" y="366" width="55" height="1" fill="#3a3a3a"/><rect x="6" y="367" width="55" height="1" fill="#565656"/>
<rect x="6" y="412" width="55" height="1" fill="#3a3a3a"/><rect x="6" y="413" width="55" height="1" fill="#565656"/>
<rect x="7" y="88" width="26" height="21" fill="#303030"/>
<path d="M15.5 89.5 L15.5 105 L18.8 102 L21 107 L23.4 106 L21.2 101.2 L25.5 101 Z" fill="#1c1c1c" stroke="#ececec" stroke-width="1.1" stroke-linejoin="miter"/>
<path d="M44 90 L44 105 L47.3 102 L49.5 107 L52 106 L49.8 101.2 L54 101 Z" fill="url(#gl)"/>
<path d="M61 104.5 L61 108 L57.5 108 Z" fill="#e6e6e6"/>
<path d="M17 120 L27 130" stroke="#d4d4d4" stroke-width="1.8"/>
<path d="M16.5 113 L17.3 117 L20.5 114.5 L18.8 118 L22.5 118.5 L19 120 L21 123 L17.6 121.2 L16.5 125 L15.6 121.3 L12 123.5 L14.2 120 L10.8 118.8 L14.4 118 L12.6 114.5 L15.8 117 Z" fill="#d4d4d4"/>
<ellipse cx="47" cy="119.5" rx="8" ry="5" fill="none" stroke="#a8a8a8" stroke-width="1.6" transform="rotate(-8 47 119.5)"/>
<path d="M41.5 122 C40 125 43.5 125 42.5 127.5 C42 129 40.5 129 40.5 129" fill="none" stroke="#a8a8a8" stroke-width="1.3"/>
<path d="M48 116.5 L48 130 L51 127 L55.5 124 Z" fill="#d4d4d4"/>
<g transform="translate(20 145) rotate(45)"><path d="M-3.100 -11 L3.100 -11 L3.100 -7.600 L-3.100 -7.600 Z" fill="#d4d4d4"/><path d="M-2 -11 v3.400 M0 -11 v3.400 M2 -11 v3.400" stroke="#8a8a8a" stroke-width="0.700"/><path d="M-3.300 -6.600 L3.300 -6.600 L4.600 -0.500 L0 11 L-4.600 -0.500 Z" fill="#bebebe" stroke="#d4d4d4" stroke-width="0.900"/><path d="M0 11 L0 2" stroke="#3c3c3c" stroke-width="0.900"/><circle cx="0" cy="1.300" r="1.200" fill="#2e2e2e"/></g>
<path d="M32 151.5 L32 155 L28.5 155 Z" fill="#e6e6e6"/>
<g transform="translate(49.5 145) rotate(45)"><path d="M-3.100 -11 L3.100 -11 L3.100 -7.600 L-3.100 -7.600 Z" fill="#d4d4d4"/><path d="M-2 -11 v3.400 M0 -11 v3.400 M2 -11 v3.400" stroke="#8a8a8a" stroke-width="0.700"/><path d="M-3.300 -6.600 L3.300 -6.600 L4.600 -0.500 L0 11 L-4.600 -0.500 Z" fill="#bebebe" stroke="#d4d4d4" stroke-width="0.900"/><path d="M0 11 L0 2" stroke="#3c3c3c" stroke-width="0.900"/><circle cx="0" cy="1.300" r="1.200" fill="#2e2e2e"/></g>
<path d="M42.200 140.300 C40.500 139 39.500 140 40 142 C40.800 146 38 149 39.300 151.300 C40 152.500 41.500 152.600 42.300 152.300" fill="none" stroke="#d4d4d4" stroke-width="1.300"/>
<text x="19" y="175" font-family="Liberation Serif,serif" font-size="19" fill="#d4d4d4" text-anchor="middle">T</text>
<path d="M32 174.5 L32 178 L28.5 178 Z" fill="#e6e6e6"/>
<path d="M41.5 174 L54 161.5" stroke="#d4d4d4" stroke-width="1.5"/>
<path d="M61 174.5 L61 178 L57.5 178 Z" fill="#e6e6e6"/>
<rect x="13" y="185" width="13" height="10.5" fill="url(#gv)" stroke="#d4d4d4" stroke-width="1.2"/>
<path d="M32 196.5 L32 200 L28.5 200 Z" fill="#e6e6e6"/>
<path d="M56 183 L48 192 L50 193.5 Z" fill="#d4d4d4"/><path d="M47.5 192.5 L49.5 194.5 C48 198 44 197.5 40.5 196 C43.5 195.5 44.5 193 47.5 192.5 Z" fill="#a8a8a8" stroke="#d4d4d4" stroke-width="0.6"/>
<path d="M61 196.5 L61 200 L57.5 200 Z" fill="#e6e6e6"/>
<g transform="translate(19 213) rotate(45)"><rect x="-2.6" y="-10" width="5.2" height="3" fill="#d4d4d4"/><rect x="-2.6" y="-6.3" width="5.2" height="10.5" fill="#a8a8a8"/><path d="M-2.6 4.6 L2.6 4.6 L0 10 Z" fill="#d4d4d4"/></g>
<path d="M32 219.5 L32 223 L28.5 223 Z" fill="#e6e6e6"/>
<path d="M41 214 L48 207 L56.5 207 L49.5 214 Z" fill="#d4d4d4"/><path d="M41 214.6 L49.5 214.6 L49.5 219 L41 219 Z" fill="#a8a8a8"/><path d="M50.2 214.2 L56.8 207.6 L56.8 212 L50.2 218.8 Z" fill="#8a8a8a"/>
<path d="M61 219.5 L61 223 L57.5 223 Z" fill="#e6e6e6"/>
<path d="M16.500 232.200 A6.300 6.300 0 0 1 25.300 239.800" fill="none" stroke="#d4d4d4" stroke-width="1.600"/><path d="M25.300 239.800 A6.300 6.300 0 1 1 14.500 233.500" fill="none" stroke="#d4d4d4" stroke-width="1.500" stroke-dasharray="2 1.700"/><path d="M12.800 232.600 L17.800 229.600 L17.800 235 Z" fill="#d4d4d4"/>
<path d="M32 243.5 L32 247 L28.5 247 Z" fill="#e6e6e6"/>
<rect x="39.5" y="237.5" width="8" height="6" fill="#5a5a5a" stroke="#a8a8a8" stroke-width="1.2"/><rect x="43.5" y="231.5" width="11.5" height="9" fill="#5a5a5a" stroke="#d4d4d4" stroke-width="1.2"/><path d="M47 238 L52.5 233 M49 233 L52.8 232.8 L52.6 236.5" stroke="#d4d4d4" stroke-width="1.2" fill="none"/>
<path d="M61 243.5 L61 247 L57.5 247 Z" fill="#e6e6e6"/>
<path d="M14 258.500 C14 254.500 16.800 253 17.800 256 C18.800 259 20.300 259.500 22 256.800 C23.500 254.300 26.200 255 27.500 258 C28.800 261 27.300 263.300 25.300 261.300 C23.500 259.500 22.800 262.500 20.800 264.200 C18.800 265.800 16.300 264.800 15.300 262.300 Z" fill="#a8a8a8" stroke="#d4d4d4" stroke-width="0.900"/><path d="M12.500 266.300 L16.500 261.500" stroke="#d4d4d4" stroke-width="1"/><circle cx="16.800" cy="261.200" r="2" fill="#f4f4f4" stroke="#3a3a3a" stroke-width="0.900"/><circle cx="16.800" cy="261.200" r="0.700" fill="#222"/><circle cx="12.300" cy="266.500" r="1.300" fill="#484848" stroke="#d4d4d4" stroke-width="0.900"/><circle cx="22.300" cy="254.300" r="1.200" fill="#d4d4d4"/><circle cx="15.500" cy="253.800" r="1" fill="#d4d4d4"/>
<path d="M32 266.5 L32 270 L28.5 270 Z" fill="#e6e6e6"/>
<rect x="45" y="254.5" width="10" height="10" fill="none" stroke="#d4d4d4" stroke-width="1.3" stroke-dasharray="2 1.5"/><path d="M40.5 253 L40.5 264.5 L43.3 262 L47.5 258.5 Z" fill="#d4d4d4"/>
<circle cx="15.5" cy="281" r="4.2" fill="#6e6e6e" stroke="#d4d4d4" stroke-width="1.1"/><circle cx="21" cy="280" r="4.8" fill="none" stroke="#a8a8a8" stroke-width="1.1"/><path d="M13 281 h1 m1 0 h1 m1 0 h1" stroke="#eee" stroke-width="1.2"/><path d="M22 280 L22 291 L24.8 288.5 L29 286 Z" fill="#d4d4d4"/>
<path d="M32 289.5 L32 293 L28.5 293 Z" fill="#e6e6e6"/>
<path d="M40.5 275 L40.5 291 L56 291 M44 276.5 L44 291 M47.5 279 L47.5 291 M51 282.5 L51 291 M40.5 279 L44 280 L47.5 282 L51 285 L56 288.5 M40.5 283 L47.5 285.5 L56 290 M40.5 287 L56 290.5" stroke="#d4d4d4" stroke-width="1.1" fill="none"/><path d="M41 276 L47 280 L51 284 L51 290.5 L41 290.5 Z" fill="#a8a8a8" opacity=".45"/>
<path d="M61 289.5 L61 293 L57.5 293 Z" fill="#e6e6e6"/>
<rect x="12.5" y="300.5" width="14" height="11" fill="#3d3d3d" stroke="#d4d4d4" stroke-width="1.1"/><path d="M12.5 304 C16 302 19 306 26.5 303 M12.5 308 C17 306 20 310 26.5 307.5 M17 300.5 C15.5 304 18.5 308 17 311.5 M22 300.5 C20.5 304 23.5 308 22 311.5" fill="none" stroke="#d4d4d4" stroke-width="1"/>
<rect x="40.5" y="300.5" width="15" height="11" fill="url(#gh)" stroke="#d4d4d4" stroke-width="1.1"/>
<g transform="translate(19.5 329) rotate(45)"><rect x="-2.2" y="-10.5" width="4.4" height="5" rx="1.5" fill="#d4d4d4"/><rect x="-3.6" y="-5.6" width="7.2" height="2" fill="#d4d4d4"/><path d="M-1.8 -3.4 L1.8 -3.4 L1.8 5.5 L0 9.5 L-1.8 5.5 Z" fill="none" stroke="#d4d4d4" stroke-width="1.1"/></g>
<path d="M32 335.5 L32 339 L28.5 339 Z" fill="#e6e6e6"/>
<rect x="40" y="322" width="8" height="8" fill="#a8a8a8"/><circle cx="47.5" cy="328.5" r="4" fill="#6e6e6e" stroke="#a8a8a8" stroke-width="1"/><circle cx="52" cy="331.5" r="4.2" fill="#555" stroke="#d4d4d4" stroke-width="1.2"/>
<rect x="18.5" y="350.5" width="8.5" height="11" rx="1" fill="#4a4a4a" stroke="#d4d4d4" stroke-width="1.2"/><rect x="20.5" y="346.5" width="4.5" height="3" fill="#d4d4d4"/><circle cx="22.7" cy="356" r="2" fill="none" stroke="#d4d4d4" stroke-width="1.1"/><path d="M11 346.5 h1.3 m1.2 0 h1.3 m1.2 0 h1.3 M12.2 348.5 h1.3 m1.2 0 h1.3 m1.2 0 h1.3 M11 350.5 h1.3 m1.2 0 h1.3" stroke="#d4d4d4" stroke-width="1.1"/>
<path d="M32 360.5 L32 364 L28.5 364 Z" fill="#e6e6e6"/>
<path d="M40.5 346 L40.5 361.5 L56 361.5" fill="none" stroke="#d4d4d4" stroke-width="1.2"/><rect x="42.5" y="354" width="3" height="7" fill="#a8a8a8"/><rect x="47" y="348.5" width="3" height="12.5" fill="#a8a8a8"/><rect x="51.5" y="352" width="3" height="9" fill="#a8a8a8"/>
<path d="M61 360.5 L61 364 L57.5 364 Z" fill="#e6e6e6"/>
<rect x="14.500" y="373.500" width="10.500" height="9.500" fill="url(#gv)" stroke="#d4d4d4" stroke-width="1"/><path d="M10.500 373.500 H13 M26.500 373.500 H29 M10.500 383 H13 M26.500 383 H29 M14.500 369.500 V372 M25 369.500 V372 M14.500 384.500 V387 M25 384.500 V387" stroke="#d4d4d4" stroke-width="1"/>
<path d="M40.5 385.5 L50 374.5 L53 377.5 Z" fill="#d4d4d4"/><path d="M50.5 374 L56 371 L56 374.5 L53.5 377 Z" fill="#a8a8a8"/>
<path d="M61 384.5 L61 388 L57.5 388 Z" fill="#e6e6e6"/>
<path d="M14.5 408 C13 405 11.5 402.5 11.5 401 C12.5 400 14 401 15 403 L15 394.5 C15 393 17 393 17 394.5 L17.3 399 L17.8 392.8 C17.8 391.3 19.8 391.3 19.8 392.8 L20 399 L21 393.6 C21.2 392.2 23 392.5 22.9 394 L22.6 399.6 L24 396 C24.6 394.8 26.2 395.4 25.8 396.8 L24.5 403 C24.3 405 24 406.5 23.5 408 Z" fill="url(#gl)"/>
<path d="M32 406.5 L32 410 L28.5 410 Z" fill="#e6e6e6"/>
<circle cx="46.200" cy="398.500" r="5" fill="#858585" stroke="#a8a8a8" stroke-width="1.600"/><path d="M50 402.500 L54.800 407.300" stroke="#a8a8a8" stroke-width="2.600" stroke-linecap="round"/>
<path d="M50 419.500 C53 419.500 54.500 421 54.500 424" fill="none" stroke="#d4d4d4" stroke-width="1.400"/><path d="M47 419.500 L50.500 416.800 L50.500 422.200 Z M51.800 423.500 L57.200 423.500 L54.500 427 Z" fill="#d4d4d4"/>
<rect x="23" y="433" width="33" height="33" fill="#fff" stroke="#2a2a2a" stroke-width="1"/><rect x="34" y="443.5" width="13" height="13" fill="#404040"/>
<path d="M24 465 L55 434" stroke="#e3141b" stroke-width="2.2"/>
<pattern id="dots2" width="2" height="2" patternUnits="userSpaceOnUse"><rect width="1" height="1" fill="#cfcfcf"/><rect x="1" y="1" width="1" height="1" fill="#cfcfcf"/></pattern><radialGradient id="fade2"><stop offset="0.2" stop-color="#fff" stop-opacity="0"/><stop offset="0.95" stop-color="#fff" stop-opacity="1"/></radialGradient>
<rect x="6" y="416" width="33" height="33" fill="#fff" stroke="#2a2a2a" stroke-width="1"/><rect x="8" y="418" width="29" height="29" fill="url(#dots2)"/><rect x="8" y="418" width="29" height="29" fill="url(#fade2)"/>
<rect x="9.5" y="459.5" width="6.5" height="6.5" fill="#1e1e1e" stroke="#e8e8e8" stroke-width="1"/><rect x="5.5" y="455.5" width="6.5" height="6.5" fill="#fff" stroke="#222" stroke-width="1"/>
<rect x="7" y="473" width="54" height="18" fill="#3a3a3a"/>
<rect x="8" y="474" width="17" height="16" fill="#555"/><rect x="26" y="474" width="17" height="16" fill="#2e2e2e"/><rect x="44" y="474" width="16" height="16" fill="#555"/>
<rect x="10.5" y="476.5" width="11" height="11" fill="#fff" stroke="#1c1c1c" stroke-width="1"/>
<rect x="28.5" y="476.5" width="11" height="11" fill="#fff" stroke="#1c1c1c" stroke-width="1"/><rect x="30" y="478" width="8" height="8" fill="url(#dots2)"/>
<rect x="46.5" y="476.5" width="11" height="11" fill="#fff" stroke="#1c1c1c" stroke-width="1"/><path d="M47.5 486.5 L56.5 477.5" stroke="#e3141b" stroke-width="2.6"/>
<rect x="7" y="497" width="18" height="15" fill="#2f2f2f"/><rect x="25" y="497" width="36" height="15" fill="#5e5e5e"/>
<circle cx="15.5" cy="503.5" r="3.8" fill="none" stroke="#d4d4d4" stroke-width="1.2"/><rect x="16" y="504" width="5.5" height="5.5" fill="#a8a8a8"/>
<circle cx="33" cy="503.500" r="3.8" fill="#777" stroke="#d4d4d4" stroke-width="1.2"/><rect x="34.5" y="505.5" width="5" height="4.500" fill="#5e5e5e" stroke="#a8a8a8" stroke-width="0.8"/>
<circle cx="51" cy="503.5" r="3.8" fill="none" stroke="#d4d4d4" stroke-width="1.2"/><rect x="51.5" y="504" width="3" height="3" fill="#d4d4d4"/>
<rect x="22.5" y="525.5" width="14" height="10" fill="#5a5a5a" stroke="#d4d4d4" stroke-width="1.2"/><rect x="27.5" y="521.5" width="15" height="10" fill="url(#gv)" stroke="#d4d4d4" stroke-width="1.2"/>
</svg>
<!--VSCROLL-->
<!--VS-->
<!--PANELS-->
<div class="abs panel" style="left:982px;top:69px;width:229px;height:180px">
<div class="abs phead" style="left:0;top:0;width:100%;height:12px"></div>
<div class="abs ptabs" style="left:0;top:12px;width:100%;height:19px"></div>
<div class="abs ptab" style="left:0;top:12px;width:38px;height:19px"><span class="pt" style="left:6px;top:3px">Capas</span></div>
<div class="abs ptab off" style="left:39px;top:12px;width:85px;height:19px"><span class="pt" style="left:6px;top:3px;color:#9a9a9a">Mesas de trabajo</span></div>
<svg class="abs" style="left:-1px;top:-1px" width="229" height="180" viewBox="982 69 229 180"><path d="M1185.5 72 L1182.5 75 L1185.5 78 Z M1190 72 L1187 75 L1190 78 Z" fill="#e0e0e0"/><path d="M1199.3 72.3 L1204.7 77.7 M1204.7 72.3 L1199.3 77.7" stroke="#e0e0e0" stroke-width="1.5"/><path d="M1192 86.5 L1197 86.5 L1194.5 90.0 Z" fill="#d0d0d0"/><path d="M1198 85.5 h8 M1198 87.5 h8 M1198 89.5 h8 M1198 91.5 h8" stroke="#d0d0d0" stroke-width="1" shape-rendering="crispEdges"/><rect x="1198" y="100" width="13" height="149" fill="#4a4a4a"/><rect x="1199" y="103" width="6" height="118" fill="#3a3a3a" stroke="#2e2e2e" stroke-width="1"/><rect x="1199" y="103" width="6" height="19" fill="#8c9bb5"/><path d="M1200 103 L1205 103 L1205 108 Z" fill="#e6ecf5"/><rect x="1198" y="228" width="13" height="1" fill="#3a3a3a"/><rect x="1198" y="242" width="13" height="1" fill="#3a3a3a"/><path d="M1209 232 v8 M1207 234 v6 M1205 236 v4 M1203 238 v2" stroke="#777" stroke-width="1" stroke-dasharray="1 1"/></svg>
</div>
<div class="abs panel" style="left:981px;top:91px;width:218px;height:182px;background:#515151">
<div class="abs phead" style="left:0;top:0;width:100%;height:12px"></div>
<div class="abs ptabs" style="left:0;top:12px;width:100%;height:17px"></div>
<div class="abs ptab" style="left:0;top:12px;width:51px;height:17px;background:#515151"><span class="pt" style="left:13px;top:2px">Alinear</span></div>
<span class="pt" style="left:4.5px;top:33px;transform:scaleX(.77)">Alinear objetos:</span>
<span class="pt" style="left:4.5px;top:83px;transform:scaleX(.77)">Distribuir objetos:</span>
<span class="pt" style="left:4.5px;top:134px;transform:scaleX(.77)">Distribuir espaciado:</span>
<span class="pt" style="left:161px;top:135px;transform:scaleX(.77)">Alinear con:</span>
<svg class="abs" style="left:-1px;top:-1px" width="218" height="182" viewBox="981 91 218 182">
<path d="M1173.5 94.5 L1170.5 97.5 L1173.5 100.5 Z M1178 94.5 L1175 97.5 L1178 100.5 Z" fill="#e0e0e0"/><path d="M1187.3 94.8 L1192.7 100.2 M1192.7 94.8 L1187.3 100.2" stroke="#e0e0e0" stroke-width="1.5"/><path d="M1181 109.5 L1186 109.5 L1183.5 113.0 Z" fill="#d0d0d0"/><path d="M1187 108.5 h8 M1187 110.5 h8 M1187 112.5 h8 M1187 114.5 h8" stroke="#d0d0d0" stroke-width="1" shape-rendering="crispEdges"/>
<path d="M985.300 110.300 L988 107.300 L990.700 110.300 M985.300 113.300 L988 116.300 L990.700 113.300" fill="none" stroke="#d8d8d8" stroke-width="1.200"/>
<rect x="985" y="169" width="207" height="1" fill="#3e3e3e"/><rect x="985" y="170" width="207" height="1" fill="#5a5a5a"/>
<rect x="985" y="220" width="207" height="1" fill="#3e3e3e"/><rect x="985" y="221" width="207" height="1" fill="#5a5a5a"/>
<rect x="1129" y="225" width="1" height="48" fill="#3e3e3e"/><rect x="1130" y="225" width="1" height="48" fill="#5a5a5a"/>
<path d="M992.5 144.5 v14" stroke="#d8d8d8" stroke-width="1.3"/><rect x="994.5" y="146.0" width="6" height="4" fill="#bdbdbd"/><rect x="994.5" y="152.5" width="9" height="4.5" fill="none" stroke="#d8d8d8" stroke-width="1.1"/>
<path d="M1032 144.0 v15" stroke="#d8d8d8" stroke-width="1.2"/><rect x="1029" y="146.0" width="6" height="4" fill="#bdbdbd"/><rect x="1027.500" y="152.5" width="9" height="4.5" fill="#515151" stroke="#d8d8d8" stroke-width="1.1"/>
<path d="M1072.5 144.5 v14" stroke="#d8d8d8" stroke-width="1.3"/><rect x="1064.5" y="146.0" width="6" height="4" fill="#bdbdbd"/><rect x="1061.5" y="152.5" width="9" height="4.5" fill="none" stroke="#d8d8d8" stroke-width="1.1"/>
<path d="M1106 144.5 h14" stroke="#d8d8d8" stroke-width="1.3"/><rect x="1108" y="146.5" width="4.5" height="10.500" fill="none" stroke="#d8d8d8" stroke-width="1.1"/><rect x="1114.5" y="146.5" width="4" height="6" fill="#bdbdbd"/>
<path d="M1139.5 150.5 h15" stroke="#d8d8d8" stroke-width="1.2"/><rect x="1142" y="145.0" width="4.5" height="11" fill="#515151" stroke="#d8d8d8" stroke-width="1.1"/><rect x="1148.5" y="147.5" width="4" height="6" fill="#bdbdbd"/>
<path d="M1173 158.5 h14" stroke="#d8d8d8" stroke-width="1.3"/><rect x="1175" y="146.0" width="4.5" height="10.5" fill="none" stroke="#d8d8d8" stroke-width="1.1"/><rect x="1181.5" y="150.5" width="4" height="6" fill="#bdbdbd"/>
<path d="M992 197.5 h14 M992 204.5 h14" stroke="#d8d8d8" stroke-width="1.2"/><rect x="996" y="198" width="6" height="3.5" fill="#bdbdbd"/><rect x="995" y="205" width="8" height="3.500" fill="none" stroke="#d8d8d8" stroke-width="1.1"/>
<path d="M1025.5 199.5 h14 M1025.5 206.5 h14" stroke="#d8d8d8" stroke-width="1.2"/><rect x="1029.5" y="197.5" width="6" height="4" fill="#bdbdbd"/><rect x="1028.500" y="204.5" width="8" height="4" fill="#515151" stroke="#d8d8d8" stroke-width="1.1"/>
<path d="M1059 202.5 h14 M1059 209.5 h14" stroke="#d8d8d8" stroke-width="1.2"/><rect x="1063" y="198.5" width="6" height="3.5" fill="#bdbdbd"/><rect x="1062" y="205.5" width="8" height="3.500" fill="none" stroke="#d8d8d8" stroke-width="1.1"/>
<path d="M1108.5 196 v14 M1115.5 196 v14" stroke="#d8d8d8" stroke-width="1.2"/><rect x="1109" y="198.5" width="3.5" height="8" fill="none" stroke="#d8d8d8" stroke-width="1.1"/><rect x="1116" y="200" width="3.5" height="6" fill="#bdbdbd"/>
<path d="M1144 196 v14 M1151 196 v14" stroke="#d8d8d8" stroke-width="1.2"/><rect x="1142" y="198.5" width="4" height="8" fill="#515151" stroke="#d8d8d8" stroke-width="1.1"/><rect x="1149" y="200" width="4" height="6" fill="#bdbdbd"/>
<path d="M1178.5 196 v14 M1185.5 196 v14" stroke="#d8d8d8" stroke-width="1.2"/><rect x="1174.5" y="200" width="3.500" height="6" fill="#bdbdbd"/><rect x="1181.5" y="198.5" width="3.5" height="8" fill="none" stroke="#d8d8d8" stroke-width="1.1"/>
<rect x="998" y="248" width="4" height="3" fill="#bdbdbd"/><path d="M1026.5 247 v5 M1029 247 v5" stroke="#d8d8d8" stroke-width="1"/>
<rect x="1046.5" y="245.500" width="15" height="14" fill="#6a6a6a" stroke="#333" stroke-width="1"/><rect x="1062.5" y="245.5" width="52" height="14" fill="#7a7a7a" stroke="#333" stroke-width="1"/><path d="M1051 250 l3 -3 l3 3 Z" fill="#999"/>
<rect x="1150.5" y="247.5" width="10" height="8" fill="none" stroke="#d8d8d8" stroke-width="1" stroke-dasharray="2 1"/>
</svg></div>
<div class="abs panel" style="left:986px;top:251px;width:238px;height:191px;background:#515151">
<div class="abs phead" style="left:0;top:0;width:100%;height:13px"></div>
<div class="abs ptabs" style="left:0;top:13px;width:100%;height:16px"></div>
<div class="abs ptab off" style="left:0;top:13px;width:54px;height:16px"><span class="pt" style="left:7px;top:0.500px;color:#9a9a9a">Muestras</span></div>
<div class="abs ptab" style="left:55px;top:13px;width:54px;height:17px;background:#515151"><span class="pt" style="left:6px;top:0.500px">Símbolos</span></div>
<div class="abs" style="left:5px;top:34px;width:227px;height:131px;background:#464646;border:1px solid #333"></div>
<div class="abs" style="left:0;top:182px;width:100%;height:10px;background:#3d3d3d;border-top:1px solid #303030"></div>
<svg class="abs" style="left:-1px;top:-1px" width="238" height="192" viewBox="986 251 238 192">
<path d="M1199.5 255 L1196.5 258 L1199.5 261 Z M1204 255 L1201 258 L1204 261 Z" fill="#e0e0e0"/><path d="M1212.8 255.3 L1218.2 260.7 M1218.2 255.3 L1212.8 260.7" stroke="#e0e0e0" stroke-width="1.5"/><path d="M1206 269.5 L1211 269.5 L1208.5 273.0 Z" fill="#d0d0d0"/><path d="M1212 268.5 h8 M1212 270.5 h8 M1212 272.5 h8 M1212 274.5 h8" stroke="#d0d0d0" stroke-width="1" shape-rendering="crispEdges"/>
<rect x="1206" y="286" width="12" height="129" fill="#4c4c4c"/><rect x="1205" y="286" width="1" height="129" fill="#3a3a3a"/>
<path d="M1208 296 L1216 296 L1212 290.500 Z" fill="#8a8a8a"/><path d="M1208 406 L1216 406 L1212 411.5 Z" fill="#8a8a8a"/>
<defs>
<linearGradient id="sy1" x1="0" y1="0" x2="0" y2="1"><stop offset="0" stop-color="#e8e8e8"/><stop offset="0.22" stop-color="#e8e8e8"/><stop offset="0.26" stop-color="#8fb2e0"/><stop offset="0.5" stop-color="#3560b8"/><stop offset="0.58" stop-color="#2a4fa8"/><stop offset="0.75" stop-color="#8fb2e0"/><stop offset="0.79" stop-color="#e8e8e8"/><stop offset="1" stop-color="#e8e8e8"/></linearGradient>
<radialGradient id="sy3" cx="0.5" cy="0.4" r="0.6"><stop offset="0" stop-color="#f7a83a"/><stop offset="0.7" stop-color="#e8820a"/><stop offset="1" stop-color="#d86f00"/></radialGradient>
</defs>
<rect x="992" y="286" width="29.500" height="29.5" fill="#e9e9e9"/>
<rect x="1023" y="286" width="29.500" height="29.5" fill="#e9e9e9"/>
<rect x="1054" y="286" width="29.500" height="29.5" fill="#e9e9e9"/>
<rect x="1085" y="286" width="29.500" height="29.5" fill="#e9e9e9"/>
<rect x="1116" y="286" width="29.500" height="29.5" fill="#e9e9e9"/>
<rect x="1147" y="286" width="29.500" height="29.5" fill="#e9e9e9"/>
<rect x="992" y="317.5" width="29.500" height="29.500" fill="#e9e9e9"/>
<rect x="993.500" y="287" width="26.5" height="27.5" fill="url(#sy1)"/>
<path d="M1036 293 C1039 292 1042 294 1043 297 L1047 293 L1045 298 C1048 299 1048 303 1045 305 L1048 310 L1043 307 C1041 310 1037 310 1035 308 L1030 311 L1032 306 C1029 305 1028 301 1031 299 L1027 296 L1032 296 C1033 294 1034 293 1036 293 Z" fill="#050505"/><circle cx="1028.5" cy="308" r="2" fill="#050505"/><circle cx="1046.5" cy="291" r="1.500" fill="#050505"/><circle cx="1049" cy="301" r="1.2" fill="#050505"/><circle cx="1036" cy="290" r="1.1" fill="#050505"/><circle cx="1039" cy="312.500" r="1.3" fill="#050505"/>
<circle cx="1068.7" cy="300.7" r="12.5" fill="#f3b96a"/><circle cx="1068.7" cy="300.7" r="10.5" fill="url(#sy3)"/><ellipse cx="1068.7" cy="295" rx="8" ry="4" fill="#fbc87a" opacity=".6"/>
<path d="M1089 289.500 H1097 M1089.500 289 V298" stroke="#111" stroke-width="1.6"/><path d="M1108 289 l3 2 M1110 291 l1 -2 M1089 310 l2 3 M1110 310 l2 2 l-3 1" stroke="#555" stroke-width="0.8" fill="none"/><path d="M1091 291 q2 1 4 0 M1091 292 q1 2 0 4" stroke="#444" stroke-width="0.7" fill="none"/>
<g fill="none" stroke="#2e2e2e" stroke-width="0.600" stroke-linejoin="round"><polygon points="1143.00,300.70 1138.37,310.32 1127.96,312.69 1119.62,306.04 1119.62,295.36 1127.96,288.71 1138.37,291.08"/><polygon points="1142.50,302.04 1137.01,310.77 1126.76,311.91 1119.48,304.61 1120.65,294.37 1129.38,288.89 1139.11,292.31"/><polygon points="1141.87,303.28 1135.65,311.04 1125.70,311.01 1119.52,303.22 1121.76,293.53 1130.73,289.24 1139.68,293.58"/><polygon points="1141.11,304.39 1134.31,311.13 1124.79,310.03 1119.72,301.90 1122.92,292.86 1131.98,289.73 1140.07,294.86"/><polygon points="1140.25,305.36 1133.01,311.07 1124.04,308.97 1120.08,300.65 1124.12,292.36 1133.11,290.36 1140.29,296.14"/><polygon points="1139.30,306.18 1131.78,310.84 1123.44,307.87 1120.57,299.49 1125.33,292.03 1134.13,291.09 1140.35,297.39"/><polygon points="1138.30,306.85 1130.63,310.48 1123.01,306.74 1121.18,298.45 1126.52,291.86 1135.01,291.92 1140.25,298.60"/><polygon points="1137.26,307.38 1129.57,309.99 1122.73,305.61 1121.89,297.53 1127.69,291.84 1135.75,292.82 1140.01,299.73"/><polygon points="1136.20,307.74 1128.62,309.40 1122.61,304.50 1122.68,296.74 1128.80,291.96 1136.34,293.77 1139.64,300.79"/><polygon points="1135.15,307.96 1127.80,308.71 1122.63,303.42 1123.54,296.09 1129.84,292.22 1136.79,294.74 1139.16,301.75"/><polygon points="1134.12,308.04 1127.09,307.95 1122.78,302.40 1124.43,295.57 1130.80,292.60 1137.10,295.73 1138.57,302.60"/></g><polygon points="1132.41,307.08 1126.78,306.01 1124.10,300.95 1126.39,295.70 1131.93,294.22 1136.54,297.62 1136.75,303.34" fill="#ebebeb" stroke="#555" stroke-width="0.500"/>
<g fill="#ee8474"><ellipse cx="1161.7" cy="294.500" rx="1.400" ry="6.200" transform="rotate(0 1161.7 300.7)"/><ellipse cx="1161.7" cy="294.500" rx="1.400" ry="6.200" transform="rotate(15 1161.7 300.7)"/><ellipse cx="1161.7" cy="294.500" rx="1.400" ry="6.200" transform="rotate(30 1161.7 300.7)"/><ellipse cx="1161.7" cy="294.500" rx="1.400" ry="6.200" transform="rotate(45 1161.7 300.7)"/><ellipse cx="1161.7" cy="294.500" rx="1.400" ry="6.200" transform="rotate(60 1161.7 300.7)"/><ellipse cx="1161.7" cy="294.500" rx="1.400" ry="6.200" transform="rotate(75 1161.7 300.7)"/><ellipse cx="1161.7" cy="294.500" rx="1.400" ry="6.200" transform="rotate(90 1161.7 300.7)"/><ellipse cx="1161.7" cy="294.500" rx="1.400" ry="6.200" transform="rotate(105 1161.7 300.7)"/><ellipse cx="1161.7" cy="294.500" rx="1.400" ry="6.200" transform="rotate(120 1161.7 300.7)"/><ellipse cx="1161.7" cy="294.500" rx="1.400" ry="6.200" transform="rotate(135 1161.7 300.7)"/><ellipse cx="1161.7" cy="294.500" rx="1.400" ry="6.200" transform="rotate(150 1161.7 300.7)"/><ellipse cx="1161.7" cy="294.500" rx="1.400" ry="6.200" transform="rotate(165 1161.7 300.7)"/><ellipse cx="1161.7" cy="294.500" rx="1.400" ry="6.200" transform="rotate(180 1161.7 300.7)"/><ellipse cx="1161.7" cy="294.500" rx="1.400" ry="6.200" transform="rotate(195 1161.7 300.7)"/><ellipse cx="1161.7" cy="294.500" rx="1.400" ry="6.200" transform="rotate(210 1161.7 300.7)"/><ellipse cx="1161.7" cy="294.500" rx="1.400" ry="6.200" transform="rotate(225 1161.7 300.7)"/><ellipse cx="1161.7" cy="294.500" rx="1.400" ry="6.200" transform="rotate(240 1161.7 300.7)"/><ellipse cx="1161.7" cy="294.500" rx="1.400" ry="6.200" transform="rotate(255 1161.7 300.7)"/><ellipse cx="1161.7" cy="294.500" rx="1.400" ry="6.200" transform="rotate(270 1161.7 300.7)"/><ellipse cx="1161.7" cy="294.500" rx="1.400" ry="6.200" transform="rotate(285 1161.7 300.7)"/><ellipse cx="1161.7" cy="294.500" rx="1.400" ry="6.200" transform="rotate(300 1161.7 300.7)"/><ellipse cx="1161.7" cy="294.500" rx="1.400" ry="6.200" transform="rotate(315 1161.7 300.7)"/><ellipse cx="1161.7" cy="294.500" rx="1.400" ry="6.200" transform="rotate(330 1161.7 300.7)"/><ellipse cx="1161.7" cy="294.500" rx="1.400" ry="6.200" transform="rotate(345 1161.7 300.7)"/></g><circle cx="1161.7" cy="300.7" r="4.500" fill="#e9907c"/><circle cx="1161.7" cy="300.7" r="3.300" fill="#e8c060"/><circle cx="1161.7" cy="300.7" r="1.800" fill="#d4a23c"/>
<rect x="994" y="327.5" width="25.5" height="3" fill="#0a0a0a"/><rect x="994" y="331.5" width="25.5" height="2.500" fill="#0a0a0a"/><rect x="994" y="335" width="25.500" height="1.5" fill="#0a0a0a"/>
<path d="M995 421.0 v9 M997.5 421.0 v9 M999.5 421.0 l4 9" stroke="#d8d8d8" stroke-width="1.500" fill="none"/><path d="M1005 428.5 h4.5 l-2.250 2.500 Z" fill="#d8d8d8"/>
<path d="M1086 422.0 v4 h5 M1091 423.0 l3 3 l-3 3 Z" stroke="#727272" stroke-width="1.4" fill="#727272"/>
<path d="M1108 425.5 a3 3 0 0 1 3 -3 h2 M1108 425.5 a3 3 0 0 0 3 3 h2 M1121 425.5 a3 3 0 0 0 -3 -3 h-2 M1121 425.5 a3 3 0 0 1 -3 3 h-2" stroke="#727272" stroke-width="1.300" fill="none"/><path d="M1114.5 418.5 v3 M1114.500 429.5 v3 M1110 419.5 l1 2 M1119 419.5 l-1 2" stroke="#727272" stroke-width="0.900"/>
<rect x="1133" y="421.0" width="8.500" height="9" fill="none" stroke="#727272" stroke-width="1"/><path d="M1135 423.5 h5 M1135 425.5 h5 M1135 427.5 h5" stroke="#727272" stroke-width="0.900" stroke-dasharray="1 1"/>
<path d="M1158 420.5 h10 v10 h-4.500 l0 -5.500 l-5.5 0 Z" fill="#e4e4e4"/><path d="M1158.500 426.5 l4 4 v-4 Z" fill="#bdbdbd"/>
<path d="M1182 422.5 h8.500 l-1 8 h-6.500 Z" fill="none" stroke="#727272" stroke-width="1.100"/><path d="M1181 421.5 h10.500 M1184.500 420.0 h3.500 M1184.5 424.0 v5 M1186.300 424.0 v5 M1188 424.0 v5" stroke="#727272" stroke-width="1"/>
<path d="M1220 422 v8 M1218 424 v6 M1216 426 v4 M1214 428 v2" stroke="#808080" stroke-width="1" stroke-dasharray="1 1"/>
<rect x="1095" y="436.5" width="1" height="4" fill="#1e1e1e"/>
<rect x="1097" y="436.5" width="1" height="4" fill="#1e1e1e"/>
<rect x="1099" y="436.5" width="1" height="4" fill="#1e1e1e"/>
<rect x="1101" y="436.5" width="1" height="4" fill="#1e1e1e"/>
<rect x="1103" y="436.5" width="1" height="4" fill="#1e1e1e"/>
<rect x="1105" y="436.5" width="1" height="4" fill="#1e1e1e"/>
<rect x="1107" y="436.5" width="1" height="4" fill="#1e1e1e"/>
<rect x="1109" y="436.5" width="1" height="4" fill="#1e1e1e"/>
<rect x="1111" y="436.5" width="1" height="4" fill="#1e1e1e"/>
</svg></div>
<!--ENDPANELS-->
<div id="leftedge" class="abs" style="left:0;top:61px;width:1px;height:621px;background:#262626"></div>
<!--STATUS-->
<div id="vscroll" class="abs"><div class="abs" style="left:1px;top:285px;width:13px;height:14px;background:#8c8c8c;border:1px solid #a0a0a0;border-right-color:#6a6a6a;border-bottom-color:#6a6a6a"></div><svg class="abs" style="left:0;top:0" width="15" height="587" viewBox="0 0 15 587"><path d="M3 12 L12 12 L7.500 5 Z" fill="#ececec"/><path d="M3.500 575 L11.500 575 L7.500 581.500 Z" fill="#ececec"/></svg></div>
<div id="rdock" class="abs"><div class="abs" style="left:0;top:0;width:37px;height:10px;background:#323232"></div><div class="abs" style="left:1px;top:11px;width:36px;height:90px;background:#4d4d4d;border-left:1px solid #3a3a3a;border-bottom:1px solid #333"></div>
<svg class="abs" style="left:-1px;top:-1px" width="37" height="110" viewBox="1243 60 37 110">
<path d="M1270.500 63 L1267.500 66 L1270.500 69 Z M1275 63 L1272 66 L1275 69 Z" fill="#e0e0e0"/>
<rect x="1253" y="75" width="1" height="4" fill="#1e1e1e"/>
<rect x="1255" y="75" width="1" height="4" fill="#1e1e1e"/>
<rect x="1257" y="75" width="1" height="4" fill="#1e1e1e"/>
<rect x="1259" y="75" width="1" height="4" fill="#1e1e1e"/>
<rect x="1261" y="75" width="1" height="4" fill="#1e1e1e"/>
<rect x="1263" y="75" width="1" height="4" fill="#1e1e1e"/>
<rect x="1265" y="75" width="1" height="4" fill="#1e1e1e"/>
<rect x="1267" y="75" width="1" height="4" fill="#1e1e1e"/>
<rect x="1269" y="75" width="1" height="4" fill="#1e1e1e"/>
<rect x="1271" y="75" width="1" height="4" fill="#1e1e1e"/>
<g transform="translate(0 1.5) translate(1263.5 96) scale(1.08) translate(-1263.5 -96)"><path d="M1258.500 91 a5.200 5.200 0 0 0 0 10.400 h9.500 a4.700 4.700 0 0 0 0.500 -9.300 a5.500 5.500 0 0 0 -10 -1.100 Z" fill="#8c8c8c" stroke="#d6d6d6" stroke-width="1.500"/><ellipse cx="1260.500" cy="96.500" rx="3.300" ry="2.600" fill="none" stroke="#d6d6d6" stroke-width="1.400" transform="rotate(-25 1260.500 96.500)"/><ellipse cx="1266.500" cy="96" rx="3.800" ry="3" fill="none" stroke="#d6d6d6" stroke-width="1.400" transform="rotate(-25 1266.500 96)"/></g>
<circle cx="1263.500" cy="120.500" r="5.500" fill="#b4b4b4"/><circle cx="1263.500" cy="120.500" r="8" fill="none" stroke="#d4d4d4" stroke-width="1.300" stroke-dasharray="2.200 1.500"/>
<path d="M1258 141 H1271.500 V152.500 H1264" fill="none" stroke="#d4d4d4" stroke-width="1.200"/><rect x="1256" y="147" width="7" height="7" fill="#4d4d4d" stroke="#d4d4d4" stroke-width="1.100"/><path d="M1256 150.500 h7 M1259.500 147 v7" stroke="#d4d4d4" stroke-width="0.900"/>
</svg></div>
<div id="status" class="abs">
<div class="abs" style="left:457px;top:0;width:701px;height:16px;background:#2f2f2f"></div>
<div class="abs" style="left:798px;top:1px;width:14px;height:14px;background:#8c8c8c;border:1px solid #a0a0a0;border-right-color:#6a6a6a;border-bottom-color:#6a6a6a"></div>
<div class="abs" style="left:1158px;top:0;width:16px;height:16px;background:#444;border-left:-2px solid #333"></div>
<div class="abs sinp" style="left:57px;width:48px"><span>100%</span></div>
<div class="abs sdd" style="left:106px"></div>
<div class="abs sinp" style="left:160px;width:40px"><span>1</span></div>
<div class="abs sdd" style="left:200px"></div>
<span class="abs" style="left:328px;top:2px;color:#e6e6e6;font-size:11px;font-weight:bold;transform:scaleX(.78);transform-origin:0 0;white-space:nowrap">Selección</span>
<svg class="abs" style="left:0;top:-1px" width="1174" height="16" viewBox="70 667 1174 16">
<rect x="76.500" y="670.500" width="18" height="9" fill="#505050" stroke="#5c5c5c" stroke-width="1"/><path d="M80 675 h4 M82 673 v4 M87 674 l3 0 l-1.500 -1.500 M91 676 l-3 0 l1.500 1.500" stroke="#686868" stroke-width="1.200" fill="none"/>
<path d="M105 672 h4 M105 672 v7.500 h8.500 v-2.500" fill="none" stroke="#e0e0e0" stroke-width="1.300"/><path d="M107.500 677 C108 673.500 110 672.500 112.500 672.500 L112.500 670 L116.500 673.500 L112.500 677 L112.500 674.800 C110.500 674.800 109 675.200 107.500 677 Z" fill="#f0f0f0"/>
<path d="M179.500 673 L186.500 673 L183 678 Z" fill="#f0f0f0"/><path d="M273 673 L280 673 L276.500 678 Z" fill="#f0f0f0"/>
<path d="M200 671.500 v7 M205.500 671.500 L201.500 675 L205.500 678.500 Z" fill="#6e6e6e" stroke="#6e6e6e" stroke-width="1"/><path d="M220.500 671.500 L216 675 L220.500 678.500 Z" fill="#6e6e6e"/>
<path d="M294.500 671.500 L299 675 L294.500 678.500 Z" fill="#6e6e6e"/><path d="M314 671.500 v7 M308.500 671.500 L312.500 675 L308.500 678.500 Z" fill="#6e6e6e" stroke="#6e6e6e" stroke-width="1"/>
<rect x="324" y="668" width="1" height="14" fill="#3a3a3a"/><rect x="325" y="668" width="1" height="14" fill="#555"/>
<path d="M517.500 671 L523 675 L517.500 679 Z" fill="#f0f0f0"/><rect x="526" y="667" width="1" height="16" fill="#383838"/>
<path d="M539 670.500 L533 675 L539 679.500 Z" fill="#f0f0f0"/><path d="M1216 670.500 L1222 675 L1216 679.500 Z" fill="#f0f0f0"/>
</svg></div>
<div id="bottomstrip" class="abs"></div>
</div>
</body>
</html>
